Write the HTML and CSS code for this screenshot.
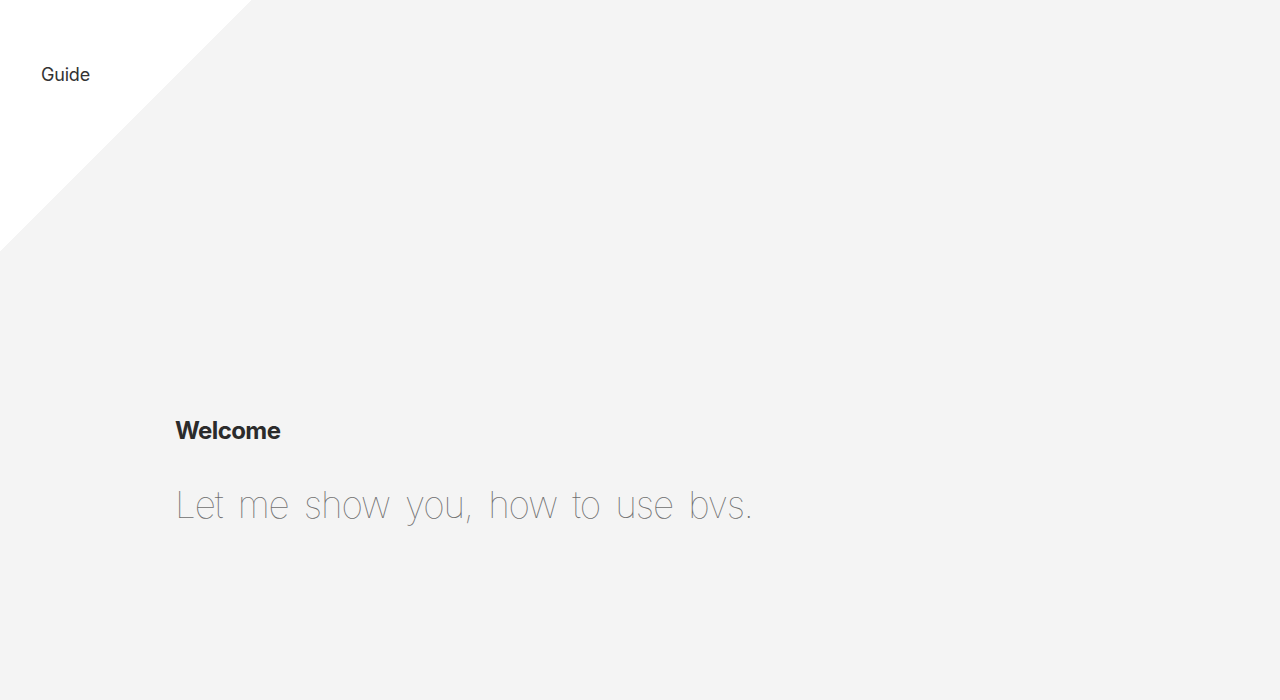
FILE: index.html
```html
<!DOCTYPE html>
<html lang="en">
<head>
<meta charset="utf-8">
<title>Guide</title>
<link rel="stylesheet" href="styles.css">
</head>
<body>
<div class="page">
  <header class="top">
    <span class="brand">Guide</span>
  </header>
  <main class="intro">
    <h1 class="title">Welcome</h1>
    <p class="lead">Let me show you, how to use bvs.</p>
  </main>
</div>
</body>
</html>
```

FILE: styles.css
```css
html, body {
  margin: 0;
  padding: 0;
  height: 100%;
}
body {
  background-color: #f4f4f4;
  background-image: linear-gradient(to bottom right, #ffffff 50%, rgba(255,255,255,0) 50%);
  background-size: 252px 252px;
  background-repeat: no-repeat;
  font-family: Inter, "Liberation Sans", sans-serif;
  color: #2d2d2d;
}
.page {
  display: flex;
  flex-direction: column;
  height: 700px;
}
.top {
  padding: 64px 0 0 41px;
}
.brand {
  font-size: 18px;
  line-height: 22px;
  color: #333333;
  letter-spacing: -0.2px;
}
.intro {
  padding: 330px 0 0 175px;
}
.title {
  margin: 0;
  font-size: 24px;
  line-height: 30px;
  font-weight: 700;
  letter-spacing: -0.6px;
  color: #2b2b2b;
}
.lead {
  margin: 35px 0 0 0;
  font-size: 37px;
  line-height: 48px;
  font-weight: 100;
  color: #6e6e6e;
  letter-spacing: -1.15px;
  word-spacing: 6px;
}
```
